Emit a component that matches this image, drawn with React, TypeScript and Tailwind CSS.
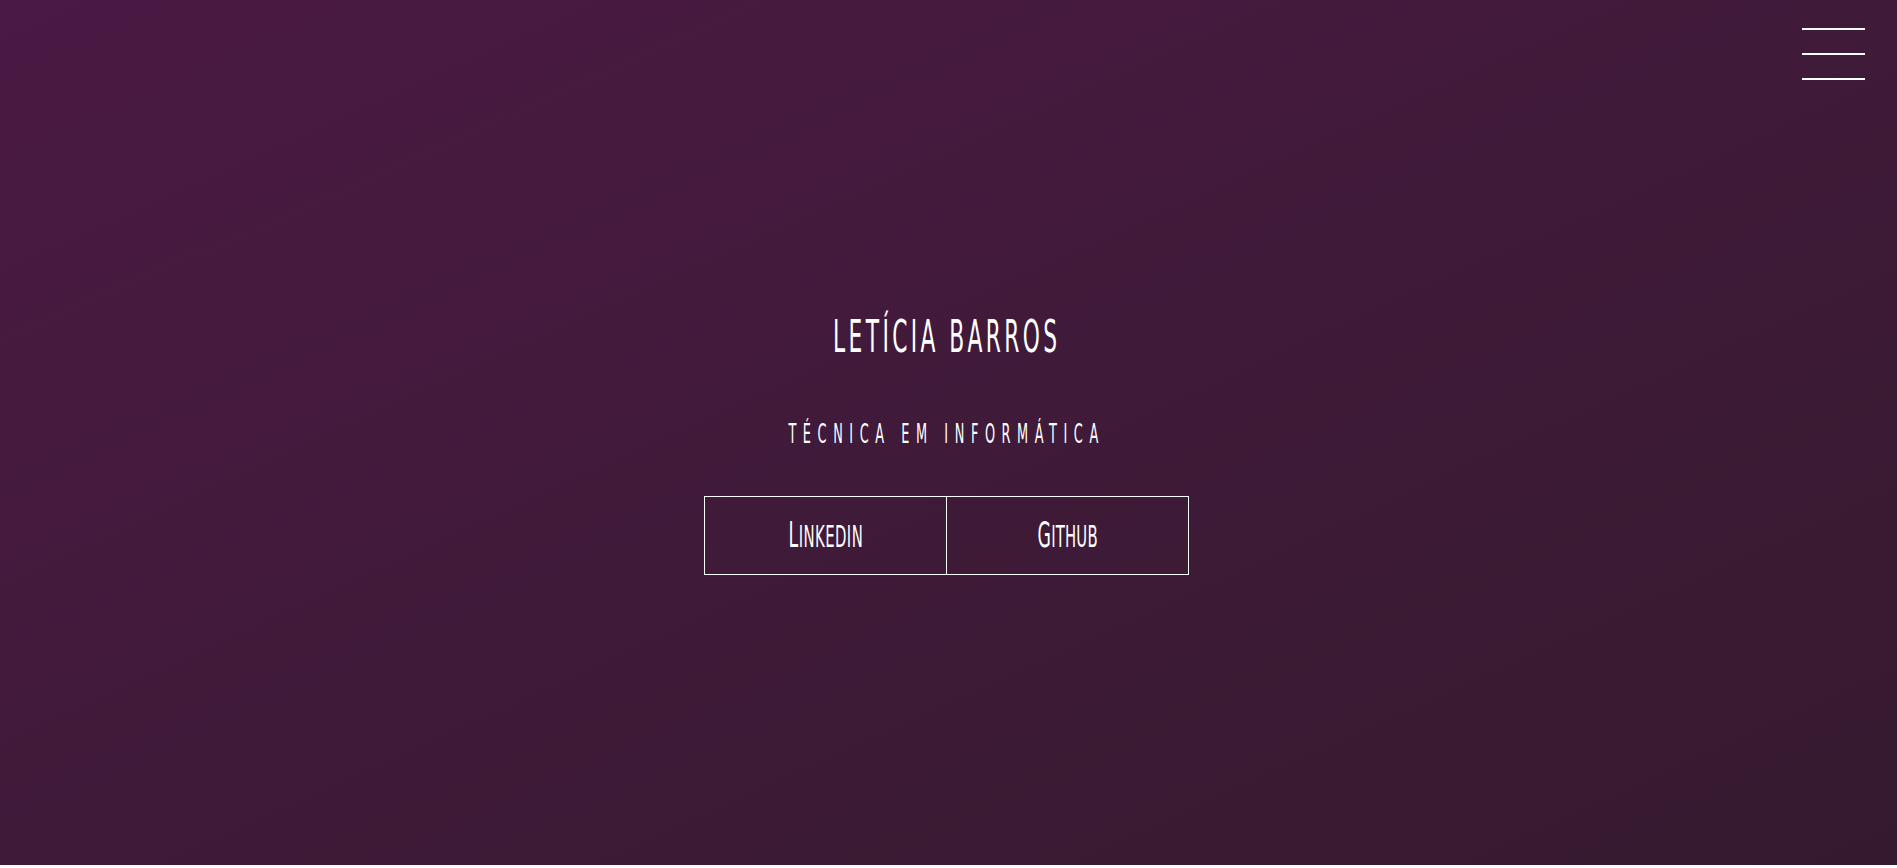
import React from 'react';

const font = "font-['DejaVu_Sans_Condensed','DejaVu_Sans',sans-serif]";

const App: React.FC = () => {
    return (
        <div className="w-full bg-white">
            <section className={`relative h-[865px] w-full bg-gradient-to-br from-[#4b1944] to-[#351a2f] text-white flex flex-col items-center pt-[315px] pr-[4px] ${font}`}>
                {/* Menu toggle */}
                <button className="absolute top-[28px] right-[32px] w-[63px] flex flex-col gap-[23px]" aria-label="menu">
                    <span className="block h-[2px] w-full bg-white"></span>
                    <span className="block h-[2px] w-full bg-white"></span>
                    <span className="block h-[2px] w-full bg-white"></span>
                </button>

                {/* Name */}
                <h1 className="h-[44px] text-[44px] leading-none font-normal">
                    <span className="inline-block scale-x-[0.55] tracking-[0.14em] whitespace-nowrap">LETÍCIA BARROS</span>
                </h1>

                {/* Role */}
                <h2 className="mt-[62px] h-[26px] text-[26px] leading-none font-normal">
                    <span className="inline-block scale-x-[0.55] tracking-[0.46em] whitespace-nowrap">TÉCNICA EM INFORMÁTICA</span>
                </h2>

                {/* Links */}
                <div className="mt-[49px] flex">
                    <a className="w-[243px] h-[79px] border border-white flex items-center justify-center leading-none">
                        <span className="inline-block scale-x-[0.55] whitespace-nowrap tracking-[0.05em]">
                            <span className="text-[35px]">L</span>
                            <span className="text-[30px] uppercase">inkedin</span>
                        </span>
                    </a>
                    <a className="w-[242px] h-[79px] border border-l-0 border-white flex items-center justify-center leading-none">
                        <span className="inline-block scale-x-[0.55] whitespace-nowrap tracking-[0.02em]">
                            <span className="text-[35px]">G</span>
                            <span className="text-[30px] uppercase">ithub</span>
                        </span>
                    </a>
                </div>
            </section>
            <div className="h-[3px] w-full bg-white"></div>
        </div>
    );
};

export default App;
